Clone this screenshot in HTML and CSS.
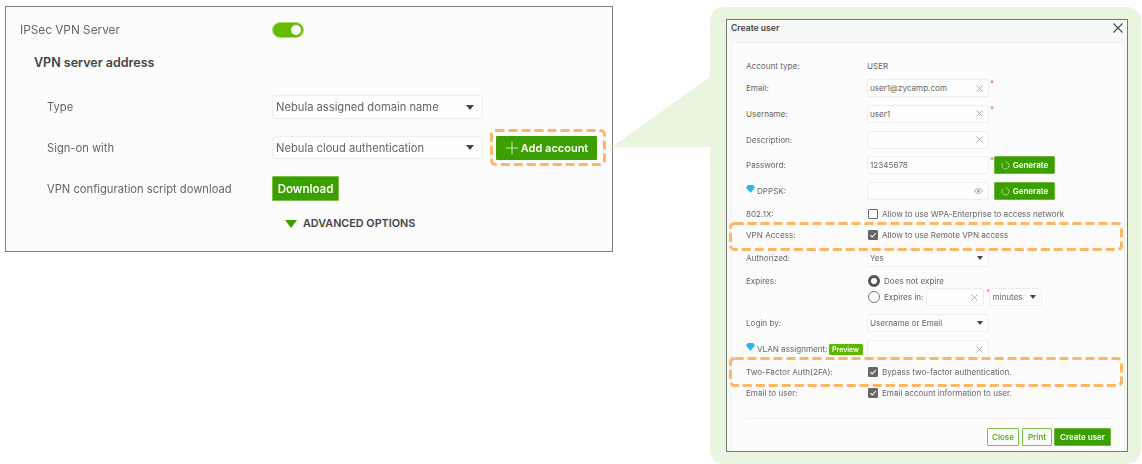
FILE: index.html
```html
<!DOCTYPE html>
<html lang="en">
<head>
<meta charset="utf-8">
<title>Create user</title>
<link rel="stylesheet" href="styles.css">
</head>
<body>
<main class="page">
  <section class="panel">
    <div class="p-row p-row-first"><span class="p-label p-label-top">IPSec VPN Server</span><span class="toggle"><span class="knob"></span></span></div>
    <h2 class="p-title">VPN server address</h2>
    <div class="p-row p-row-type"><span class="p-label">Type</span><div class="p-select"><span>Nebula assigned domain name</span><i class="caret"></i></div></div>
    <div class="p-row p-row-sign"><span class="p-label">Sign-on with</span><div class="p-select"><span>Nebula cloud authentication</span><i class="caret"></i></div>
      <button class="btn-add"><svg class="plus" viewBox="0 0 14 14" width="14" height="14"><path d="M7 0.5V13.5M0.5 7H13.5" stroke="#cfe6bf" stroke-width="1" fill="none"/></svg>Add account</button>
      <svg class="hl hl-add" width="116" height="37"><rect x="1.5" y="1.5" width="113" height="34" rx="4" class="dash"/></svg>
    </div>
    <div class="p-row p-row-dl"><span class="p-label">VPN configuration script download</span><button class="btn-dl">Download</button></div>
    <div class="advanced"><i class="adv-caret"></i><span>ADVANCED OPTIONS</span></div>
  </section>

  <svg class="wedge" width="98" height="70" viewBox="0 0 98 70"><polygon points="0,70 98,0 98,70" fill="#e9f5de"/></svg>

  <section class="callout">
    <div class="modal">
      <header class="m-head"><h1>Create user</h1><svg width="10" height="10" viewBox="0 0 10 10"><path d="M0.5 0.5L9.5 9.5M9.5 0.5L0.5 9.5" stroke="#444" stroke-width="1.1" fill="none"/></svg></header>
      <div class="card">
        <div class="row"><span class="lbl">Account type:</span><span class="val val-plain">USER</span></div>
        <div class="row mt4"><span class="lbl">Email:</span><div class="inp"><span>user1@zycamp.com</span><svg class="x" viewBox="0 0 7 7"><path d="M.5 .5L6.5 6.5M6.5 .5L.5 6.5"/></svg></div><i class="req">*</i></div>
        <div class="row mt7"><span class="lbl">Username:</span><div class="inp"><span>user1</span><svg class="x" viewBox="0 0 7 7"><path d="M.5 .5L6.5 6.5M6.5 .5L.5 6.5"/></svg></div><i class="req">*</i></div>
        <div class="row mt8"><span class="lbl">Description:</span><div class="inp"><span></span><svg class="x" viewBox="0 0 7 7"><path d="M.5 .5L6.5 6.5M6.5 .5L.5 6.5"/></svg></div></div>
        <div class="row mt7"><span class="lbl">Password:</span><div class="inp"><span>12345678</span></div><i class="req">*</i><button class="btn-gen"><svg class="spin" viewBox="0 0 10 10"><path d="M6.4 1.4A3.9 3.9 0 1 1 2.2 2.3"/><path d="M6.4 1.4L5 .2"/></svg>Generate</button></div>
        <div class="row mt8"><span class="lbl lbl-gem"><svg class="gem" viewBox="0 0 9 8"><path d="M1.8 0H7.2L9 2.6L4.5 8L0 2.6Z"/></svg>DPPSK:</span><div class="inp"><span></span><svg class="eye" viewBox="0 0 10 6"><path d="M.5 3C2 1 3.4 .4 5 .4S8 1 9.5 3C8 5 6.6 5.6 5 5.6S2 5 .5 3Z"/><circle cx="5" cy="3" r="1.3"/></svg></div><i class="req req-blank"></i><button class="btn-gen"><svg class="spin" viewBox="0 0 10 10"><path d="M6.4 1.4A3.9 3.9 0 1 1 2.2 2.3"/><path d="M6.4 1.4L5 .2"/></svg>Generate</button></div>
        <div class="row mt5"><span class="lbl">802.1X:</span><i class="cb"></i><span class="cb-text">Allow to use WPA-Enterprise to access network</span></div>
        <div class="row mt2"><span class="lbl">VPN Access:</span><i class="cb cb-on"><svg viewBox="0 0 10 10"><path d="M2.4 5.2L4.3 7L7.8 3"/></svg></i><span class="cb-text">Allow to use Remote VPN access</span></div>
        <div class="row mt5"><span class="lbl">Authorized:</span><div class="inp"><span>Yes</span><i class="caret caret-s"></i></div></div>
        <div class="row row-s mt6"><span class="lbl">Expires:</span><i class="radio radio-on"></i><span class="radio-text">Does not expire</span></div>
        <div class="row"><span class="lbl"></span><i class="radio"></i><span class="radio-text">Expires in:</span><div class="inp inp-mini"><span></span><svg class="x" viewBox="0 0 7 7"><path d="M.5 .5L6.5 6.5M6.5 .5L.5 6.5"/></svg></div><i class="req req-mini">*</i><div class="inp inp-unit"><span>minutes</span><i class="caret caret-s"></i></div></div>
        <div class="row mt8"><span class="lbl">Login by:</span><div class="inp"><span>Username or Email</span><i class="caret caret-s"></i></div></div>
        <div class="row mt8"><span class="lbl lbl-gem"><svg class="gem" viewBox="0 0 9 8"><path d="M1.8 0H7.2L9 2.6L4.5 8L0 2.6Z"/></svg>VLAN assignment:<b class="badge">Preview</b></span><div class="inp"><span></span><svg class="x" viewBox="0 0 7 7"><path d="M.5 .5L6.5 6.5M6.5 .5L.5 6.5"/></svg></div></div>
        <div class="row mt5"><span class="lbl">Two-Factor Auth(2FA):</span><i class="cb cb-on"><svg viewBox="0 0 10 10"><path d="M2.4 5.2L4.3 7L7.8 3"/></svg></i><span class="cb-text">Bypass two-factor authentication.</span></div>
        <div class="row mt3"><span class="lbl">Email to user:</span><i class="cb cb-on"><svg viewBox="0 0 10 10"><path d="M2.4 5.2L4.3 7L7.8 3"/></svg></i><span class="cb-text">Email account information to user.</span></div>
        <footer class="m-foot"><button class="btn-line btn-close">Close</button><button class="btn-line btn-print">Print</button><button class="btn-create">Create user</button></footer>
      </div>
      <svg class="hl hl-vpn" width="394" height="29"><rect x="1.5" y="1.5" width="391" height="26" rx="4" class="dash"/></svg>
      <svg class="hl hl-2fa" width="394" height="30"><rect x="1.5" y="1.5" width="391" height="27" rx="4" class="dash"/></svg>
    </div>
  </section>
</main>
</body>
</html>
```
FILE: styles.css
```css
* { box-sizing: border-box; }
html, body { margin: 0; padding: 0; background: #fff; }
body { font-family: Inter, "Liberation Sans", sans-serif; color: #666; }
button { font-family: inherit; cursor: pointer; }
i { font-style: normal; }

.page { display: flex; align-items: flex-start; width: 1142px; height: 464px; overflow: hidden; filter: blur(.3px); }

/* Left settings panel */
.panel { flex: none; width: 608px; height: 246px; margin: 6px 0 0 5px; padding: 15px 0 0 14px; background: #fcfcfc; border: 1px solid #808080; }
.p-row { display: flex; align-items: center; position: relative; }
.p-row-first { height: 16px; }
.p-label { width: 252px; padding-left: 27px; font-size: 11.2px; color: #666; white-space: nowrap; flex: none; }
.p-label-top { padding-left: 0; font-size: 11.8px; }
.toggle { display: block; width: 32px; height: 16px; border-radius: 8px; background: #64bd00; border: 1px solid #a9dc7c; position: relative; }
.knob { position: absolute; right: 2px; top: 2px; width: 10px; height: 10px; border-radius: 50%; background: #fff; }
.p-title { margin: 17px 0 0 14px; font-size: 12.5px; line-height: 16px; font-weight: 600; color: #444; }
.p-row-type { margin-top: 24px; height: 24px; }
.p-row-sign { margin-top: 17px; height: 23px; }
.p-row-dl { margin-top: 17px; height: 25px; }
.p-select { flex: none; width: 211px; height: 100%; padding: 0 8px 0 3px; display: flex; align-items: center; justify-content: space-between; background: #fdfdfd; border: 1px solid #eee; border-radius: 3px; font-size: 11.2px; color: #666; }
.caret { display: block; width: 0; height: 0; border-left: 4px solid transparent; border-right: 4px solid transparent; border-top: 5px solid #444; }
.caret-s { border-left-width: 3.5px; border-right-width: 3.5px; border-top-width: 4px; }
.btn-add { flex: none; margin-left: 13px; width: 101px; height: 24px; border: none; border-radius: 1px; background: #3c9f00; color: #fff; font-size: 11px; font-weight: 600; display: flex; align-items: center; justify-content: center; gap: 2px; padding: 0; }
.btn-dl { width: 67px; height: 25px; border: 1px solid #7cc04c; border-radius: 1px; background: #3c9f00; color: #fff; font-size: 11.5px; font-weight: 600; padding: 0; }
.advanced { display: flex; align-items: center; gap: 6px; margin: 16px 0 0 265px; font-size: 10.8px; font-weight: 600; color: #444; line-height: 14px; }
.adv-caret { width: 0; height: 0; border-left: 6px solid transparent; border-right: 6px solid transparent; border-top: 8px solid #3c9f00; }

.hl { position: absolute; pointer-events: none; }
.dash { fill: none; stroke: #fdb566; stroke-width: 3; stroke-dasharray: 9 4; }
.hl-add { left: 470px; top: -7px; }

.wedge { flex: none; margin-top: 77px; margin-left: -1px; }

/* Green callout */
.callout { flex: none; width: 431px; height: 457px; margin-top: 7px; padding: 12px 0 0 16px; background: #e9f5de; border-radius: 14px; }
.modal { position: relative; width: 402px; height: 433px; padding: 0 2px 0 4px; background: #f7f9f6; border: 1px solid #767a76; }
.m-head { height: 22px; display: flex; align-items: center; justify-content: space-between; padding: 0 2px 6px 0; }
.m-head h1 { margin: 0; font-size: 8.6px; font-weight: 600; color: #444; }
.card { height: 409px; padding: 14px 13px 0 14px; background: #fcfcfc; border: 1px solid #f1f3f1; border-bottom: none; }
.row { display: flex; align-items: center; height: 18px; font-size: 8.1px; color: #666; white-space: nowrap; }
.row-s { height: 14px; }
.mt2 { margin-top: 3px; } .mt3 { margin-top: 3px; } .mt4 { margin-top: 4px; } .mt5 { margin-top: 5px; } .mt6 { margin-top: 7px; } .mt7 { margin-top: 7.5px; } .mt8 { margin-top: 8px; }
.lbl { flex: none; width: 121px; }
.lbl-gem { display: flex; align-items: center; gap: 2px; }
.gem { flex: none; width: 9px; height: 8px; fill: #2bb5ef; margin-top: -5px; }
.badge { flex: none; margin-left: -1px; width: 34px; text-align: center; height: 11px; line-height: 11px; background: #5cb800; color: #fff; border-radius: 1.5px; font-size: 7px; font-weight: 600; }
.val-plain { color: #666; }
.inp { flex: none; width: 122px; height: 18px; display: flex; align-items: center; justify-content: space-between; padding: 0 5px 0 2px; background: #fdfdfd; border: 1px solid #eee; border-radius: 2px; }
.inp-mini { width: 58px; margin-left: 3px; }
.inp-unit { width: 53px; margin-left: 0; }
.x { width: 7px; height: 7px; fill: none; stroke: #999; stroke-width: .8; }
.eye { width: 9px; height: 6px; fill: none; stroke: #999; stroke-width: 1; }
.eye circle { fill: #999; stroke: none; }
.req { flex: none; width: 4px; margin-left: 1px; align-self: flex-start; font-size: 8px; line-height: 8px; color: #ef5a6a; }
.req-blank { visibility: hidden; }
.req-mini { width: 3px; margin-left: 2px; }
.btn-gen { flex: none; width: 61px; height: 18px; display: flex; align-items: center; justify-content: center; gap: 3px; padding: 0; border: 1px solid #6db53d; border-radius: 1px; background: #3c9f00; color: #fff; font-size: 8px; font-weight: 600; }
.spin { width: 9px; height: 9px; fill: none; stroke: #d5eac6; stroke-width: .8; }
.cb { flex: none; display: block; width: 10px; height: 10px; margin-left: 1px; background: #fff; border: 1px solid #666; border-radius: 1px; }
.cb-on { background: #666; }
.cb-on svg { display: block; width: 10px; height: 10px; margin: -1px; fill: none; stroke: #fff; stroke-width: 1.1; }
.cb-text { margin-left: 4px; }
.radio { flex: none; display: block; width: 12px; height: 12px; margin-left: 1px; background: #fff; border: 1px solid #777; border-radius: 50%; }
.radio-on { border: 3px solid #555; }
.radio-text { margin-left: 4px; }
.m-foot { display: flex; justify-content: flex-end; gap: 3px; margin-top: 16px; padding-top: 9px; border-top: 1px solid #f0f0f0; }
.m-foot button { height: 18px; padding: 0; border-radius: 1px; font-size: 8px; font-weight: 600; }
.btn-line { background: #fdfdfd; border: 1px solid #7cc04c; color: #58ad22; }
.btn-close { width: 32px; }
.btn-print { width: 30px; }
.btn-create { width: 57px; margin-left: -1px; background: #3c9f00; border: 1px solid #6db53d; color: #fff; }
.hl-vpn { left: 2px; top: 202px; }
.hl-2fa { left: 2px; top: 337px; }
```
